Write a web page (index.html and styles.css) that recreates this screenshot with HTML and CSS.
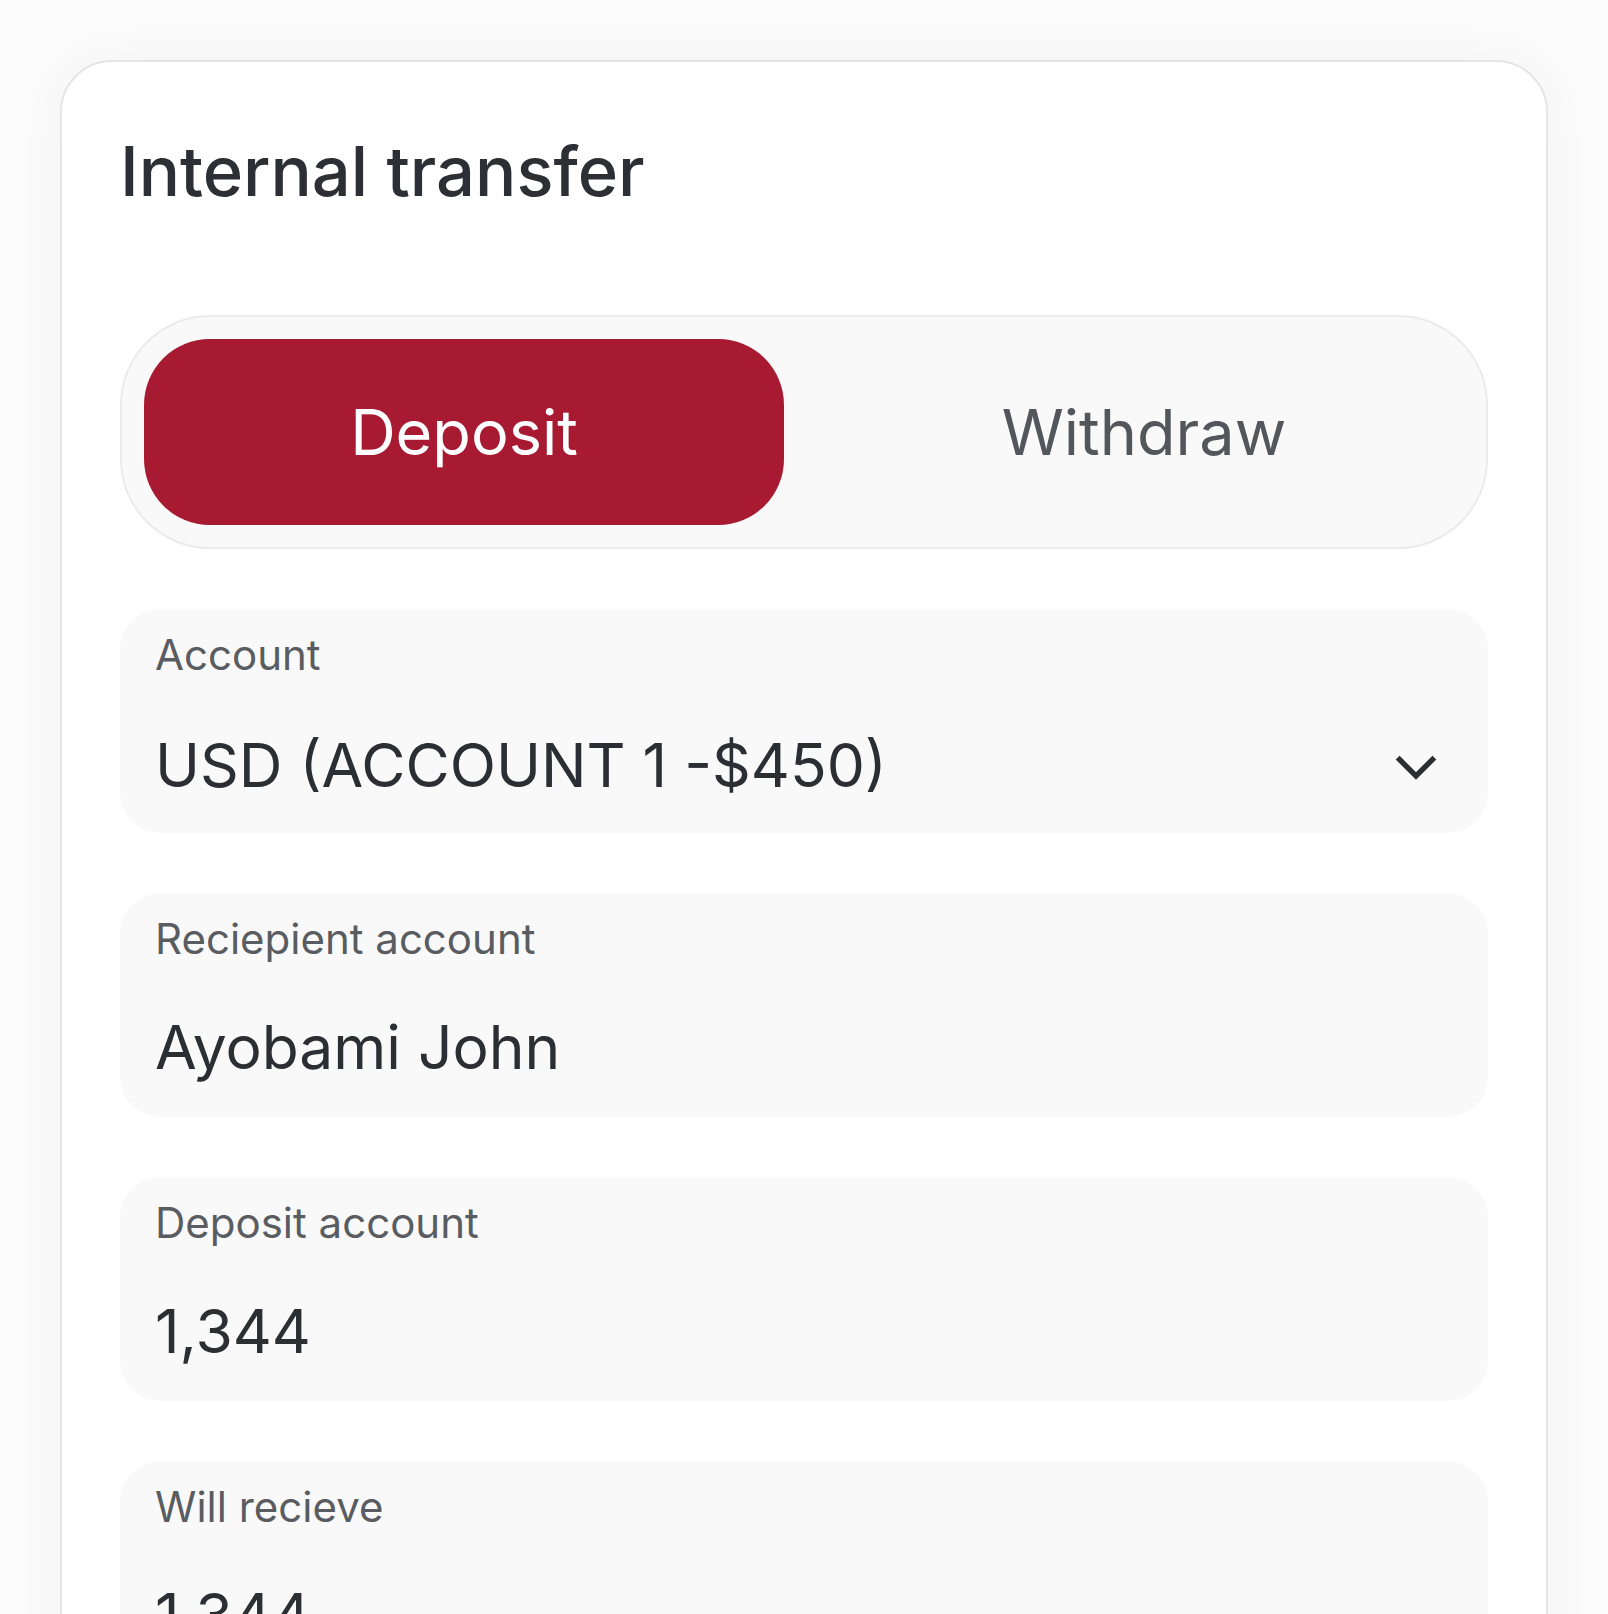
FILE: index.html
```html
<!DOCTYPE html>
<html lang="en">
<head>
<meta charset="utf-8">
<title>Internal transfer</title>
<link rel="stylesheet" href="styles.css">
</head>
<body>
<main class="card">
  <h1 class="title">Internal transfer</h1>
  <div class="toggle">
    <button class="tab tab-active" type="button">Deposit</button>
    <button class="tab" type="button">Withdraw</button>
  </div>
  <div class="fields">
    <div class="field">
      <div class="label">Account</div>
      <div class="value-row">
        <div class="value">USD (ACCOUNT 1 -$450)</div>
        <svg class="chevron" viewBox="0 0 24 24" width="72" height="72" fill="none" stroke="currentColor" stroke-width="1.8" stroke-linecap="square" stroke-linejoin="miter"><path d="M6.5 9.5 12 15l5.5-5.5"/></svg>
      </div>
    </div>
    <div class="field">
      <div class="label">Reciepient account</div>
      <div class="value">Ayobami John</div>
    </div>
    <div class="field">
      <div class="label">Deposit account</div>
      <div class="value">1,344</div>
    </div>
    <div class="field">
      <div class="label">Will recieve</div>
      <div class="value">1,344</div>
    </div>
  </div>
</main>
</body>
</html>
```

FILE: styles.css
```css
html, body {
  margin: 0;
  padding: 0;
}

body {
  background: #fbfbfb;
  font-family: Inter, "Noto Sans", "Liberation Sans", sans-serif;
  padding: 60px 60px 60px;
  overflow: hidden;
}

.card {
  background: #ffffff;
  border: 2px solid #e5e5e5;
  border-radius: 52px;
  padding: 68px 58px 58px;
  box-shadow: 0 0 50px rgba(0, 0, 0, 0.035);
}

.title {
  margin: 0 0 103px;
  font-size: 68.7px;
  font-weight: 500;
  line-height: 82px;
  color: #2c2f33;
}

.toggle {
  display: flex;
  gap: 40px;
  padding: 22px;
  background: #f9f9f9;
  border: 2px solid #ebebeb;
  border-radius: 90px;
  margin-bottom: 60px;
}

.tab {
  flex: 1 1 0;
  height: 186px;
  border: none;
  border-radius: 66px;
  background: transparent;
  font-family: inherit;
  font-size: 63px;
  font-weight: 400;
  color: #53575b;
  padding: 0;
  cursor: pointer;
}

.tab-active {
  background: #a71a32;
  color: #ffffff;
}

.fields {
  display: flex;
  flex-direction: column;
  gap: 60px;
}

.field {
  background: #f9f9f9;
  border-radius: 40px;
  height: 224px;
  box-sizing: border-box;
  padding: 20px 35px 0;
}

.label {
  font-size: 42px;
  line-height: normal;
  color: #595d61;
}

.value-row {
  display: flex;
  align-items: center;
  justify-content: space-between;
  margin-top: 47px;
}

.value-row .value {
  margin-top: 0;
}

.value {
  margin-top: 47px;
  font-size: 60.5px;
  line-height: 73px;
  color: #2b2e33;
}

.chevron {
  display: block;
  color: #2b2e33;
  margin: 4px 1px 0 0;
}
```
